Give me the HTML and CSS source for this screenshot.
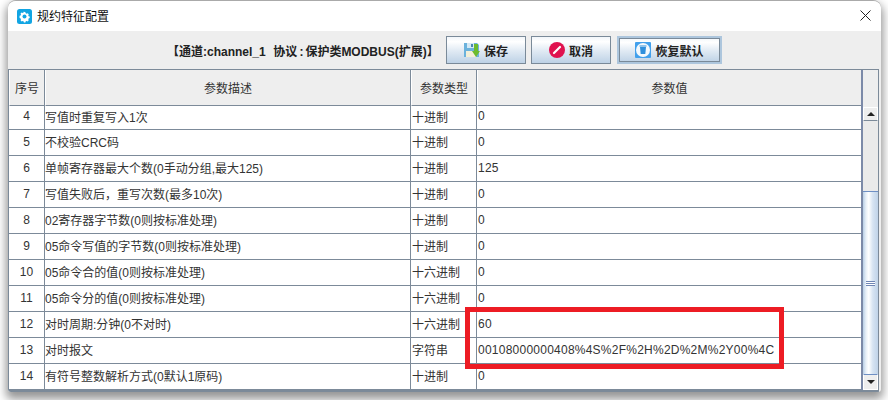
FILE: index.html
```html
<!DOCTYPE html>
<html lang="zh-CN">
<head>
<meta charset="utf-8">
<title>规约特征配置</title>
<link rel="stylesheet" href="styles.css">
</head>
<body>
<div class="window">
  <div class="titlebar">
    <svg class="title-icon" width="15" height="15" viewBox="0 0 15 15"><rect width="15" height="15" rx="2.5" fill="#12a5e3"/><path d="M7.5 2.6l1 .2.4 1.2.9.4 1.2-.5 1.2 1.2-.5 1.2.4.9 1.2.4v1.7l-1.2.4-.4.9.5 1.2-1.2 1.2-1.2-.5-.9.4-.4 1.2H6.800l-.4-1.200-.9-.4-1.200.5-1.200-1.200.5-1.200-.4-.9-1.200-.4V6.700l1.200-.4.4-.9-.5-1.200 1.200-1.200 1.200.5.9-.4.4-1.200z" fill="#fff" transform="translate(.75 .75) scale(.9)"/><circle cx="7.500" cy="7.500" r="2" fill="#12a5e3"/></svg>
    <span class="title-text">规约特征配置</span>
    <svg class="close" width="11" height="11" viewBox="0 0 11 11"><path d="M.5.5l10 10M10.500.5l-10 10" stroke="#222" stroke-width="1" fill="none"/></svg>
  </div>
  <div class="toolbar">
    <span class="channel">【通道:channel_1&nbsp;&nbsp;<span class="proto">协议<span class="colon">:</span>保护类MODBUS(扩展)】</span></span>
    <button class="btn btn-save">
      <svg width="16" height="16" viewBox="0 0 16 16"><path d="M0 1h13l2 2v12H0z" fill="#6bb2dc"/><rect x="3" y="1" width="7" height="5" fill="#d5e9f5"/><rect x="7" y="2" width="2" height="3" fill="#4a86b0"/><rect x="2" y="9" width="10" height="6" fill="#f3efd8"/><path d="M10 2h4v7h2l-4 6-4-6h2z" fill="#6cbb2e"/></svg>
      保存
    </button>
    <button class="btn btn-cancel">
      <svg width="16" height="16" viewBox="0 0 16 16"><circle cx="8" cy="8" r="8" fill="#e0134f"/><path d="M5 11l6-6" stroke="#fff" stroke-width="2.200" stroke-linecap="round"/></svg>
      取消
    </button>
    <button class="btn btn-restore">
      <svg width="16" height="16" viewBox="0 0 16 16"><rect width="16" height="16" rx="1" fill="#42a0ec"/><circle cx="8" cy="8" r="7" fill="#f4f9fd"/><path d="M5 5h6l-.7 7H5.700z" fill="#2f8fdc"/><rect x="4.500" y="3.500" width="7" height="1" fill="#2f8fdc"/></svg>
      恢复默认
    </button>
  </div>
  <div class="grid-wrap">
    <div class="grid-main">
      <table class="params">
        <colgroup><col class="c1"><col class="c2"><col class="c3"><col class="c4"></colgroup>
        <thead>
          <tr><th>序号</th><th>参数描述</th><th>参数类型</th><th>参数值</th></tr>
        </thead>
        <tbody>
          <tr class="first"><td class="num">4</td><td class="desc">写值时重复写入1次</td><td>十进制</td><td class="val">0</td></tr>
          <tr><td class="num">5</td><td class="desc">不校验CRC码</td><td>十进制</td><td class="val">0</td></tr>
          <tr><td class="num">6</td><td class="desc">单帧寄存器最大个数(0手动分组,最大125)</td><td>十进制</td><td class="val">125</td></tr>
          <tr><td class="num">7</td><td class="desc">写值失败后，重写次数(最多10次)</td><td>十进制</td><td class="val">0</td></tr>
          <tr><td class="num">8</td><td class="desc">02寄存器字节数(0则按标准处理)</td><td>十进制</td><td class="val">0</td></tr>
          <tr><td class="num">9</td><td class="desc">05命令写值的字节数(0则按标准处理)</td><td>十进制</td><td class="val">0</td></tr>
          <tr><td class="num">10</td><td class="desc">05命令合的值(0则按标准处理)</td><td>十六进制</td><td class="val">0</td></tr>
          <tr><td class="num">11</td><td class="desc">05命令分的值(0则按标准处理)</td><td>十六进制</td><td class="val">0</td></tr>
          <tr><td class="num">12</td><td class="desc">对时周期:分钟(0不对时)</td><td>十六进制</td><td class="val">60</td></tr>
          <tr><td class="num">13</td><td class="desc">对时报文</td><td>字符串</td><td class="val">00108000000408%4S%2F%2H%2D%2M%2Y00%4C</td></tr>
          <tr class="last"><td class="num">14</td><td class="desc">有符号整数解析方式(0默认1原码)</td><td>十进制</td><td class="val">0</td></tr>
        </tbody>
      </table>
    </div>
    <div class="scrollbar">
      <div class="sb-head"></div>
      <div class="sb-arrow"><span class="tri tri-up"></span></div>
      <div class="sb-track">
        <div class="sb-thumb"><span class="grip"></span></div>
      </div>
      <div class="sb-arrow"><span class="tri tri-down"></span></div>
    </div>
  </div>
</div>
<div class="highlight"></div>
</body>
</html>
```
FILE: styles.css
```css
* { box-sizing: border-box; }
html, body { margin: 0; padding: 0; }
body {
  width: 888px;
  height: 400px;
  overflow: hidden;
  background: #fff;
  position: relative;
  font-family: "Liberation Sans", "Noto Sans CJK SC", sans-serif;
  font-size: 12px;
  color: #222;
}
.window {
  margin-left: 8px;
  width: 873px;
  height: 392px;
  background: #eee;
  border-top: 1px solid #aaa;
  border-radius: 8px 8px 3px 3px;
  box-shadow: 0 5px 10px 2px rgba(0,0,0,.42);
  display: flex;
  flex-direction: column;
  overflow: hidden;
}
.titlebar {
  height: 30px;
  background: #fff;
  display: flex;
  align-items: center;
  padding: 0 10px 2px 9px;
  flex: none;
}
.title-icon { flex: none; margin-top: 2px; }
.title-text { margin-left: 5px; font-size: 12px; color: #111; }
.close { margin-left: auto; }
.toolbar {
  height: 38px;
  flex: none;
  display: flex;
  align-items: center;
  padding: 0 0 0 159px;
  background: #eee;
}
.channel { font-weight: bold; width: 279px; white-space: nowrap; color: #222; }
.proto { margin-left: 1px; }
.colon { margin: 0 2px 0 2px; }
.btn {
  height: 28px;
  width: 80px;
  margin-right: 5px;
  display: flex;
  align-items: center;
  justify-content: center;
  gap: 4px;
  padding: 0;
  font: bold 12px "Liberation Sans", "Noto Sans CJK SC", sans-serif;
  color: #222;
  border: 1px solid #7a8a99;
  background: linear-gradient(#f2f6fa 0%, #fff 18%, #dfe9f3 55%, #bed2e6 100%);
}
.btn-restore {
  width: 105px;
  margin-left: 1px;
  border: 2px solid #adc6dd;
  box-shadow: inset 0 0 0 1px #7a8a99;
}
.grid-wrap {
  height: 323px;
  flex: none;
  display: flex;
  border: 1px solid #7c8a99;
  border-bottom-width: 2px;
  margin-right: 2px;
  overflow: hidden;
  background: #eee;
}
.grid-main { width: 854px; flex: none; overflow: hidden; background: #fff; border-right: 2px solid #7c8aa8; }
.params {
  border-collapse: separate;
  border-spacing: 0;
  table-layout: fixed;
  width: 852px;
}
.c1 { width: 36px; }
.c2 { width: 366px; }
.c3 { width: 66px; }
.c4 { width: 384px; }
.params th {
  height: 36px;
  font-weight: normal;
  background: #eee;
  border-right: 1px solid #7c8a99;
  border-bottom: 1px solid #7c8a99;
  border-left: 1px solid #fff;
  padding: 0;
  color: #333;
  font-size: 12px;
}
.params th:last-child { border-right: 0; }
.params td {
  height: 26px;
  padding: 0 0 2px 1px;
  background: #fff;
  border-right: 1px solid #7c8a99;
  border-bottom: 1px solid #7c8a99;
  white-space: nowrap;
  overflow: hidden;
  color: #333;
  font-size: 12px;
}
.params td:last-child { border-right: 0; }
.params td.num { text-align: center; padding: 0 0 2px; }
.params td.desc { padding-left: 0; }
.params td.val { letter-spacing: .24px; }
.params .first td { height: 24px; padding-bottom: 3px; }
.scrollbar { flex: 1; display: flex; flex-direction: column; background: #eee; }
.sb-head { height: 37px; flex: none; }
.sb-arrow {
  height: 14px;
  flex: none;
  display: flex;
  align-items: center;
  justify-content: center;
  background: #eee;
  border: 1px solid #fff;
  border-bottom-color: #7c8a99;
}
.sb-arrow:last-child { border-bottom-color: #fff; border-top-color: #6e8fc4; height: 16px; }
.tri { width: 0; height: 0; border-left: 4px solid transparent; border-right: 4px solid transparent; }
.tri-up { border-bottom: 4px solid #222; }
.tri-down { border-top: 4px solid #222; }
.sb-track { flex: 1; display: flex; flex-direction: column; justify-content: flex-end; background: #eaeaea; }
.sb-thumb {
  height: 183px;
  border-top: 1px solid #6e8fc4;
  background: linear-gradient(90deg, #b9cfe6 0%, #e8f0f8 20%, #fff 38%, #d7e4f2 65%, #c0d3e8 100%);
  display: flex;
  align-items: center;
  justify-content: center;
}
.grip {
  width: 9px;
  height: 5px;
  border-top: 1px solid #6f86b4;
  border-bottom: 1px solid #6f86b4;
  background: linear-gradient(#fff 0 1px, #6f86b4 1px 2px, #fff 2px);
}
.highlight {
  position: absolute;
  left: 465px;
  top: 307px;
  width: 319px;
  height: 62px;
  border: 5px solid #ed1c24;
}
```
